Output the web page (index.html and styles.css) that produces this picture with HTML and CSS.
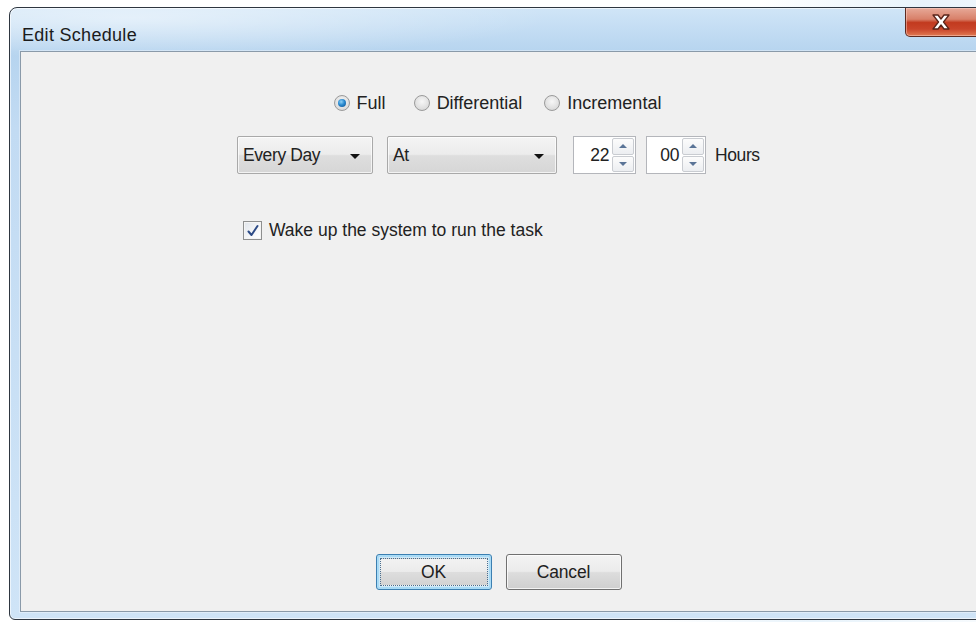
FILE: index.html
```html
<!DOCTYPE html>
<html lang="en">
<head>
<meta charset="utf-8">
<title>Edit Schedule</title>
<link rel="stylesheet" href="styles.css">
</head>
<body>
<div class="window">
  <div class="titlebar">
    <span class="title">Edit Schedule</span>
    <button class="close" aria-label="Close">
      <svg width="22" height="18" viewBox="0 0 22 18">
        <path d="M3 2h5l3 4 3-4h5l-5.5 7 5.5 7h-5l-3-4-3 4H3l5.5-7z" fill="#fff" stroke="#5b2419" stroke-width="1.3" stroke-linejoin="round"/>
      </svg>
    </button>
  </div>
  <div class="client">
    <div class="form">
      <div class="modes">
        <label class="radio radio-full checked"><span class="dot"></span>Full</label>
        <label class="radio radio-diff"><span class="dot"></span>Differential</label>
        <label class="radio"><span class="dot"></span>Incremental</label>
      </div>
      <div class="when">
        <div class="combo combo-freq"><span>Every Day</span><i class="caret"></i></div>
        <div class="combo combo-mode"><span>At</span><i class="caret"></i></div>
        <div class="spin spin-hour">
          <span class="val">22</span>
          <span class="arrows"><b class="up"></b><b class="down"></b></span>
        </div>
        <div class="spin spin-min">
          <span class="val">00</span>
          <span class="arrows"><b class="up"></b><b class="down"></b></span>
        </div>
        <span class="unit">Hours</span>
      </div>
      <label class="check">
        <span class="box">
          <svg width="14" height="14" viewBox="0 0 14 14"><path d="M2.5 7.5l3 3.5 6-9" fill="none" stroke="#2c4a86" stroke-width="2" stroke-linecap="round" stroke-linejoin="round"/></svg>
        </span>
        Wake up the system to run the task
      </label>
    </div>
    <div class="actions">
      <button class="btn btn-default"><span class="focus">OK</span></button>
      <button class="btn">Cancel</button>
    </div>
  </div>
</div>
</body>
</html>
```
FILE: styles.css
```css
html, body {
  margin: 0;
  padding: 0;
}

body {
  width: 976px;
  height: 622px;
  overflow: hidden;
  background: linear-gradient(100deg, #ffffff 0%, #ffffff 70%, #e8f3fb 85%, #f6fafd 100%);
  font-family: "Liberation Sans", Arial, sans-serif;
  color: #222;
}

/* window frame */
.window {
  box-sizing: border-box;
  margin: 7px 0 0 9px;
  width: 979px;
  height: 613px;
  border: 1px solid #2e3640;
  border-radius: 8px 8px 6px 6px;
  padding: 0 10px 7px 10px;
  display: flex;
  flex-direction: column;
  background:
    radial-gradient(ellipse 420px 40px at 120px 10px, rgba(255,255,255,0.5), rgba(255,255,255,0) 100%),
    linear-gradient(to bottom, #d0e5f7 0px, #b6d4ef 44px, #c2dbf3 120px, #cfe4f7 100%);
  box-shadow: inset 0 0 0 1px rgba(255,255,255,0.6);
}

.titlebar {
  height: 43px;
  display: flex;
  align-items: flex-start;
  justify-content: space-between;
  flex: none;
}

.title {
  margin: 17px 0 0 2px;
  font-size: 18px;
  line-height: 20px;
  color: #1b1b1b;
  letter-spacing: 0.3px;
}

.close {
  width: 82px;
  height: 29px;
  margin-right: -10px;
  border: 1px solid #5d2a20;
  border-top: none;
  border-radius: 0 0 5px 5px;
  background: linear-gradient(to bottom, #e7a998 0%, #d88069 40%, #c23a1f 52%, #c9442a 75%, #e07a52 100%);
  box-shadow: inset 0 0 0 1px rgba(255,220,210,0.45);
  display: flex;
  align-items: center;
  justify-content: flex-start;
  padding: 0 0 0 24px;
}

.close svg {
  display: block;
}

/* client area */
.client {
  flex: 1;
  box-sizing: border-box;
  border: 1px solid #8a9aa9;
  background: #f0f0f0;
  display: flex;
  flex-direction: column;
  align-items: center;
  box-shadow: 0 0 0 1px rgba(255,255,255,0.35);
}

.form {
  width: 523px;
  padding-top: 40px;
  display: flex;
  flex-direction: column;
}

.modes {
  height: 22px;
  display: flex;
  justify-content: center;
  align-items: center;
  font-size: 18px;
  letter-spacing: 0;
  padding-right: 2px;
}

.radio {
  display: flex;
  align-items: center;
}

.radio-full { margin-right: 28px; }
.radio-diff { margin-right: 22px; }

.dot {
  box-sizing: border-box;
  width: 16px;
  height: 16px;
  margin-right: 7px;
  border-radius: 50%;
  border: 1px solid #9a9a9a;
  background: radial-gradient(circle at 50% 40%, #f7f7f7 0%, #e2e2e2 55%, #cfcfcf 100%);
  display: flex;
  align-items: center;
  justify-content: center;
}

.checked .dot::after {
  content: "";
  width: 8px;
  height: 8px;
  border-radius: 50%;
  background: radial-gradient(circle at 40% 35%, #8fd0f5 0%, #2a8ad0 45%, #0f4f8c 100%);
}

.when {
  margin-top: 22px;
  height: 38px;
  display: flex;
  align-items: center;
  font-size: 17.5px;
  letter-spacing: -0.4px;
}

.combo {
  box-sizing: border-box;
  height: 38px;
  border: 1px solid #a9a9a9;
  border-radius: 2px;
  background: linear-gradient(to bottom, #f4f4f4 0%, #ececec 48%, #dedede 52%, #d6d6d6 100%);
  box-shadow: inset 0 0 0 1px rgba(255,255,255,0.7);
  display: flex;
  align-items: center;
  justify-content: space-between;
  padding: 0 12px 0 5px;
}

.combo-freq { width: 136px; margin-right: 14px; }
.combo-mode { width: 170px; margin-right: 16px; }

.caret {
  width: 0;
  height: 0;
  border-left: 5px solid transparent;
  border-right: 5px solid transparent;
  border-top: 5px solid #111;
  margin-top: 2px;
}

.spin {
  box-sizing: border-box;
  height: 38px;
  border: 1px solid #b4b6bb;
  background: #fff;
  display: flex;
  align-items: stretch;
  padding: 1px;
}

.spin-hour { width: 63px; margin-right: 10px; }
.spin-min { width: 60px; margin-right: 9px; }

.val {
  flex: 1;
  display: flex;
  align-items: center;
  justify-content: flex-end;
  padding-right: 3px;
}

.arrows {
  width: 22px;
  display: flex;
  flex-direction: column;
  gap: 1px;
}

.arrows b {
  flex: 1;
  border: 1px solid #c9ccd1;
  border-radius: 2px;
  background: linear-gradient(to bottom, #fcfcfc, #eceef1);
  display: flex;
  align-items: center;
  justify-content: center;
}

.arrows b::after {
  content: "";
  width: 0;
  height: 0;
  border-left: 4px solid transparent;
  border-right: 4px solid transparent;
}

.arrows .up::after { border-bottom: 4px solid #5a7497; }
.arrows .down::after { border-top: 4px solid #5a7497; }

.unit {
  color: #222;
}

.check {
  margin: 46px 0 0 6px;
  display: flex;
  align-items: center;
  font-size: 17.5px;
  letter-spacing: 0;
}

.box {
  box-sizing: border-box;
  width: 19px;
  height: 19px;
  margin-right: 7px;
  border: 1px solid #8e8f8f;
  background: linear-gradient(135deg, #dfe4ea 0%, #f6f7f9 60%, #ffffff 100%);
  box-shadow: inset 0 0 0 1px #f4f4f4;
  display: flex;
  align-items: center;
  justify-content: center;
}

.box svg { display: block; }

/* dialog buttons */
.actions {
  margin-top: auto;
  margin-bottom: 21px;
  display: flex;
  gap: 14px;
}

.btn {
  box-sizing: border-box;
  width: 116px;
  height: 36px;
  border: 1px solid #707070;
  border-radius: 3px;
  background: linear-gradient(to bottom, #f3f3f3 0%, #ebebeb 48%, #dddddd 52%, #cfcfcf 100%);
  box-shadow: inset 0 0 0 1px rgba(255,255,255,0.75);
  font-family: "Liberation Sans", Arial, sans-serif;
  font-size: 17.5px;
  letter-spacing: -0.2px;
  color: #1e1e1e;
  padding: 0;
  display: flex;
  align-items: center;
  justify-content: center;
}

.btn-default {
  border-color: #3c7fb1;
  box-shadow: inset 0 0 0 2px #a9dbf6;
  background: #cfe9f8;
  padding: 3px;
}

.focus {
  box-sizing: border-box;
  width: 100%;
  height: 100%;
  border: 1px dotted #4a6f8f;
  display: flex;
  align-items: center;
  justify-content: center;
  background: linear-gradient(to bottom, #f2f2f2 0%, #ebebeb 48%, #dddddd 52%, #d3d3d3 100%);
}
```
